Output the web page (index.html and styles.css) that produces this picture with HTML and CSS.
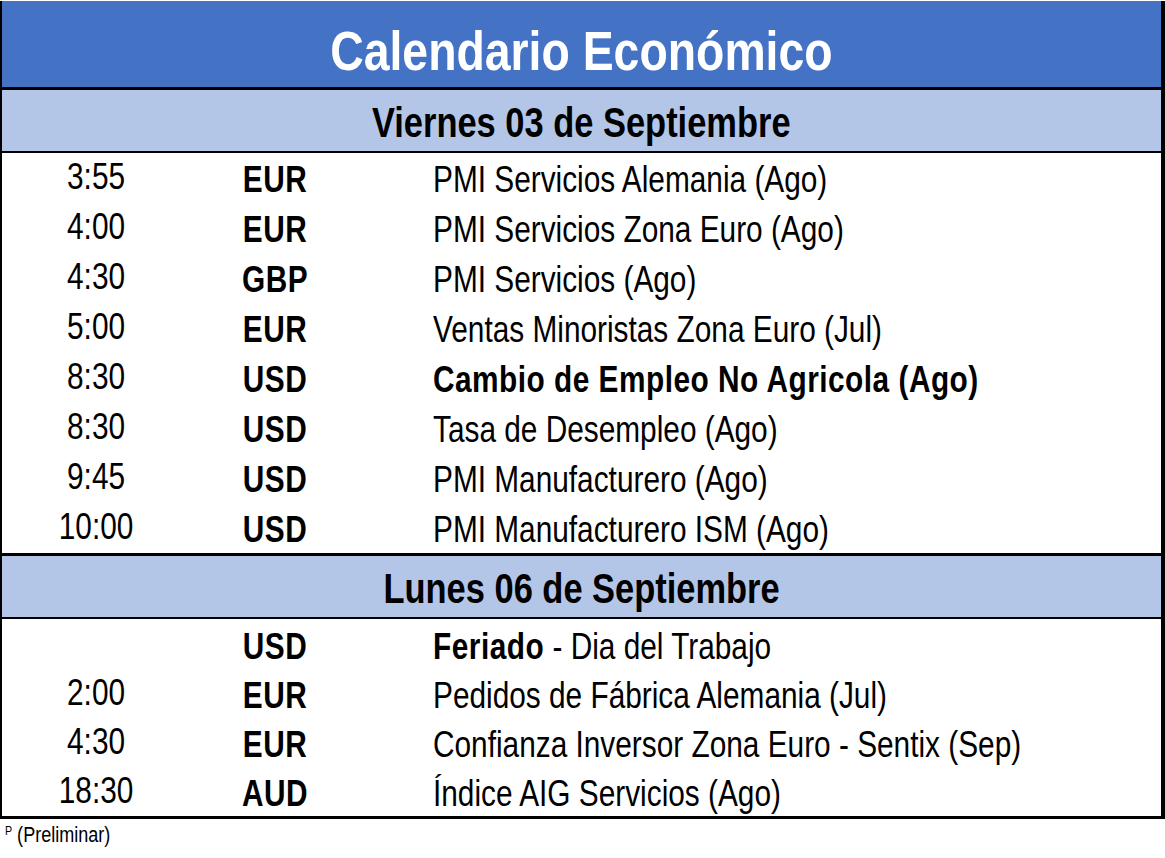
FILE: index.html
```html
<!DOCTYPE html>
<html lang="es">
<head>
<meta charset="utf-8">
<title>Calendario Económico</title>
<link rel="stylesheet" href="styles.css">
</head>
<body>
<div class="calendar">
  <div class="title"><span class="n">Calendario Económico</span></div>

  <div class="day-header"><span class="n nh">Viernes 03 de Septiembre</span></div>
  <div class="rows rows-first">
    <div class="row"><span class="time"><span class="n">3:55</span></span><span class="cur"><span class="n">EUR</span></span><span class="desc"><span class="n nl">PMI Servicios Alemania (Ago)</span></span></div>
    <div class="row"><span class="time"><span class="n">4:00</span></span><span class="cur"><span class="n">EUR</span></span><span class="desc"><span class="n nl">PMI Servicios Zona Euro (Ago)</span></span></div>
    <div class="row"><span class="time"><span class="n">4:30</span></span><span class="cur"><span class="n">GBP</span></span><span class="desc"><span class="n nl">PMI Servicios (Ago)</span></span></div>
    <div class="row"><span class="time"><span class="n">5:00</span></span><span class="cur"><span class="n">EUR</span></span><span class="desc"><span class="n nl">Ventas Minoristas Zona Euro (Jul)</span></span></div>
    <div class="row"><span class="time"><span class="n">8:30</span></span><span class="cur"><span class="n">USD</span></span><span class="desc"><span class="n nl"><b>Cambio de Empleo No Agricola (Ago)</b></span></span></div>
    <div class="row"><span class="time"><span class="n">8:30</span></span><span class="cur"><span class="n">USD</span></span><span class="desc"><span class="n nl">Tasa de Desempleo (Ago)</span></span></div>
    <div class="row"><span class="time"><span class="n">9:45</span></span><span class="cur"><span class="n">USD</span></span><span class="desc"><span class="n nl">PMI Manufacturero (Ago)</span></span></div>
    <div class="row"><span class="time"><span class="n">10:00</span></span><span class="cur"><span class="n">USD</span></span><span class="desc"><span class="n nl">PMI Manufacturero ISM (Ago)</span></span></div>
  </div>

  <div class="day-header"><span class="n nh">Lunes 06 de Septiembre</span></div>
  <div class="rows rows-second">
    <div class="row"><span class="time"></span><span class="cur"><span class="n">USD</span></span><span class="desc"><span class="n nl"><b>Feriado</b> - Dia del Trabajo</span></span></div>
    <div class="row"><span class="time"><span class="n">2:00</span></span><span class="cur"><span class="n">EUR</span></span><span class="desc"><span class="n nl">Pedidos de Fábrica Alemania (Jul)</span></span></div>
    <div class="row"><span class="time"><span class="n">4:30</span></span><span class="cur"><span class="n">EUR</span></span><span class="desc"><span class="n nl">Confianza Inversor Zona Euro - Sentix (Sep)</span></span></div>
    <div class="row"><span class="time"><span class="n">18:30</span></span><span class="cur"><span class="n">AUD</span></span><span class="desc"><span class="n nl">Índice AIG Servicios (Ago)</span></span></div>
  </div>
</div>
<div class="footnote"><span class="n nl nf"><sup class="mark">P</sup> (Preliminar)</span></div>
</body>
</html>
```

FILE: styles.css
```css
html, body {
  margin: 0;
  padding: 0;
  background: #ffffff;
}

body {
  font-family: "Liberation Sans", Arial, sans-serif;
  color: #000000;
}

/* Arial Narrow is Arial compressed horizontally; emulate it */
.n {
  display: inline-block;
  transform: scaleX(0.828);
  transform-origin: center top;
  white-space: nowrap;
}

.nl {
  transform-origin: left top;
}

.nh {
  transform: scaleX(0.82);
}

.nf {
  transform: scaleX(0.82);
}

.calendar {
  box-sizing: border-box;
  width: 1165px;
  margin-top: 1px;
  border-left: 2px solid #000;
  border-right: 4px solid #000;
  border-bottom: 3px solid #000;
  display: flex;
  flex-direction: column;
}

.title {
  box-sizing: border-box;
  height: 89px;
  padding-top: 14px;
  background: #4472c4;
  border-bottom: 3px solid #000;
  color: #ffffff;
  font-weight: bold;
  font-size: 56px;
  line-height: 72px;
  text-align: center;
}

.day-header {
  box-sizing: border-box;
  height: 63px;
  padding-top: 5px;
  background: #b4c6e7;
  border-bottom: 2px solid #000;
  font-weight: bold;
  font-size: 42px;
  line-height: 55px;
  text-align: center;
}

.rows {
  display: flex;
  flex-direction: column;
}

.rows-first {
  box-sizing: border-box;
  height: 403px;
  border-bottom: 3px solid #000;
}

.rows-second {
  box-sizing: border-box;
  height: 197px;
  padding-top: 1px;
}

.row {
  flex: 1 1 0;
  display: grid;
  grid-template-columns: 188px 170px 1fr;
  font-size: 36px;
  line-height: 44px;
  white-space: nowrap;
}

.time {
  text-align: center;
  padding-top: 2px;
}

.cur {
  text-align: center;
  font-weight: bold;
  letter-spacing: 0.7px;
  padding-top: 5px;
}

.desc {
  padding-left: 73px;
  padding-top: 5px;
}

.desc b {
  font-weight: bold;
  letter-spacing: 0.6px;
}

.footnote {
  padding: 3px 0 0 5px;
  font-size: 22px;
  line-height: 26px;
}

.mark {
  font-size: 13px;
  vertical-align: top;
  line-height: 13px;
  position: relative;
  top: 2px;
}
```
